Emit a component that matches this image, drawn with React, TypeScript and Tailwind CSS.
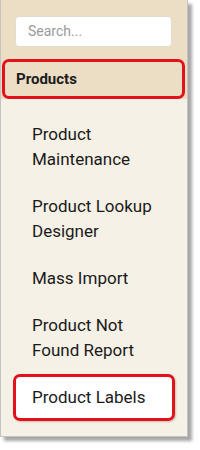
import React from "react";

const items: { label: string[]; active?: boolean }[] = [
  { label: ["Product", "Maintenance"] },
  { label: ["Product Lookup", "Designer"] },
  { label: ["Mass Import"] },
  { label: ["Product Not", "Found Report"] },
  { label: ["Product Labels"], active: true },
];

export default function App() {
  return (
    <div
      className="w-[200px] h-[450px] bg-white"
      style={{ fontFamily: "Roboto, 'Liberation Sans', sans-serif" }}
    >
      <div className="w-[188px] h-[437px] bg-[#f6f1e6] border-x border-b border-[#c4c4c4] shadow-[4px_4px_3px_rgba(0,0,0,0.35)] flex flex-col">
        <div className="bg-[#ebdec4] pt-[16px] pl-[14px] pr-[14px]">
          <div className="h-[31px] w-[157px] bg-white rounded-[4px] border border-[#e2dccd] flex items-center pl-[12px] text-[14px] text-[#9a9a9a]">
            Search...
          </div>
          <div className="h-[12px]" />
        </div>
        <div className="bg-[#ebdec4] pl-px pr-[2px]">
          <div className="h-[40px] rounded-[7px] border-[3px] border-[#e3121a] flex items-center pl-[11px] text-[15px] font-bold text-[#1c1c1c]">
            Products
          </div>
        </div>
        <div className="pt-[12px] flex flex-col">
          {items.map((it, i) => (
            <div
              key={i}
              className={
                it.active
                  ? "mx-[12px] rounded-[7px] border-[3px] border-[#e3121a] bg-white px-[16px] py-[8px] text-[17px] leading-[25px] text-[#1a1a1a] shadow-[1px_1px_2px_rgba(0,0,0,0.2)]"
                  : "mx-[12px] px-[19px] py-[11px] text-[17px] leading-[25px] text-[#1a1a1a]"
              }
            >
              {it.label.map((l, j) => (
                <div key={j}>{l}</div>
              ))}
            </div>
          ))}
        </div>
      </div>
    </div>
  );
}
